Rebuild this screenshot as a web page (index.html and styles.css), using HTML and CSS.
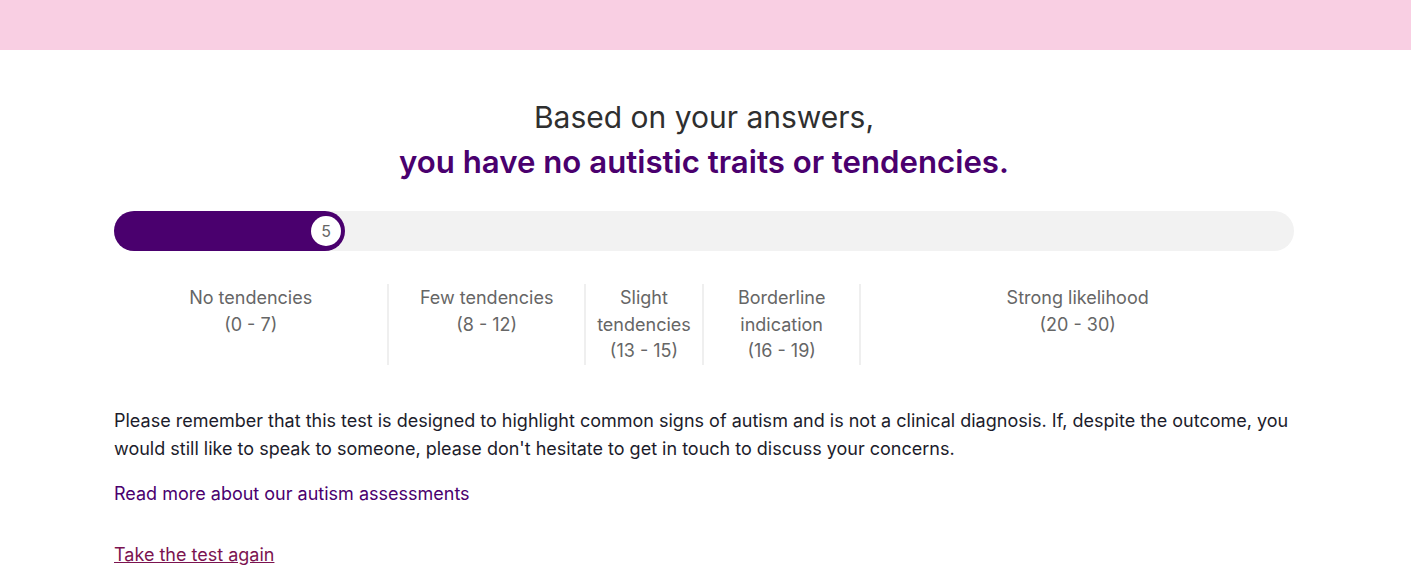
FILE: index.html
```html
<!DOCTYPE html>
<html lang="en">
<head>
<meta charset="utf-8">
<title>Autism test result</title>
<link rel="stylesheet" href="styles.css">
</head>
<body>
<header class="topbar"></header>
<main class="result">
  <h1 class="result-title">
    <span class="title-lead">Based on your answers,</span>
    <span class="title-main">you have no autistic traits or tendencies.</span>
  </h1>
  <div class="meter">
    <div class="meter-fill" style="width: 231px;">
      <span class="meter-score">5</span>
    </div>
  </div>
  <div class="bands">
    <div class="band">No tendencies<br>(0 - 7)</div>
    <div class="band">Few tendencies<br>(8 - 12)</div>
    <div class="band">Slight tendencies<br>(13 - 15)</div>
    <div class="band">Borderline indication<br>(16 - 19)</div>
    <div class="band">Strong likelihood<br>(20 - 30)</div>
  </div>
  <p class="note">Please remember that this test is designed to highlight common signs of autism and is not a clinical diagnosis. If, despite the outcome, you would still like to speak to someone, please don't hesitate to get in touch to discuss your concerns.</p>
  <a class="more-link" href="#">Read more about our autism assessments</a>
  <a class="retake-link" href="#">Take the test again</a>
</main>
</body>
</html>
```
FILE: styles.css
```css
* { box-sizing: border-box; }
html, body { margin: 0; padding: 0; background: #ffffff; }
body {
  font-family: Inter, "Liberation Sans", sans-serif;
  color: #1c1c2b;
}
.topbar {
  height: 50px;
  background: #f9cfe3;
}
.result {
  width: 1180px;
  margin: 0 117px 0 114px;
  display: flex;
  flex-direction: column;
  padding-top: 46px;
}
.result-title {
  margin: 0;
  display: flex;
  flex-direction: column;
  align-items: center;
  text-align: center;
  font-weight: 400;
}
.title-lead {
  font-size: 30px;
  line-height: 42px;
  color: #2f2f2f;
}
.title-main {
  font-size: 31.2px;
  line-height: 48px;
  font-weight: 600;
  color: #4a006e;
}
.meter {
  margin-top: 25px;
  height: 40px;
  border-radius: 20px;
  background: #f2f2f2;
  display: flex;
}
.meter-fill {
  height: 40px;
  border-radius: 20px;
  background: #4a006e;
  display: flex;
  justify-content: flex-end;
  align-items: center;
  padding-right: 4px;
}
.meter-score {
  width: 30px;
  height: 30px;
  border-radius: 50%;
  background: #ffffff;
  color: #666666;
  font-size: 16px;
  display: flex;
  align-items: center;
  justify-content: center;
}
.bands {
  display: grid;
  grid-template-columns: 7fr 5fr 3fr 4fr 11fr;
  margin-top: 33px;
}
.band {
  min-width: 0;
  text-align: center;
  font-size: 18px;
  line-height: 26.5px;
  padding-top: 1px;
  color: #666666;
  border-right: 2px solid #efefef;
}
.band:last-child { border-right: none; }
.note {
  margin: 42px 0 0;
  font-size: 18px;
  line-height: 28px;
  color: #1c1c2b;
}
.more-link {
  margin-top: 17px;
  font-size: 18px;
  line-height: 28px;
  color: #4a006e;
  text-decoration: none;
  align-self: flex-start;
}
.retake-link {
  margin-top: 33px;
  font-size: 18px;
  line-height: 28px;
  color: #7b1350;
  align-self: flex-start;
}
```
